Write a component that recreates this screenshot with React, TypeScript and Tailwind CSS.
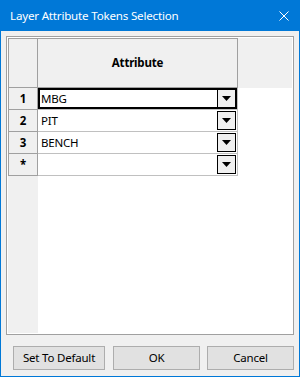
import React from 'react'

const rows = ['MBG', 'PIT', 'BENCH', '']

const DropButton = () => (
  <div className="w-[19px] h-[19px] border border-black bg-[#f0f0f0] flex items-center justify-center">
    <svg width="9" height="5" viewBox="0 0 9 5">
      <path d="M0 0H9L4.5 5Z" fill="#000" />
    </svg>
  </div>
)

const App = () => {
  return (
    <div
      className="w-[300px] h-[377px] flex flex-col bg-[#0078d7] text-[11.5px] tracking-[-0.2px] text-black"
      style={{ fontFamily: '"Noto Sans", "Liberation Sans", sans-serif' }}
    >
      <div className="h-[31px] flex items-center justify-between pl-[10px] pr-[11px] text-white text-[11.6px]">
        <span>Layer Attribute Tokens Selection</span>
        <svg width="10" height="10" viewBox="0 0 10 10">
          <path d="M0.5 0.5L9.5 9.5M9.5 0.5L0.5 9.5" stroke="#fff" strokeWidth="1" />
        </svg>
      </div>
      <div className="flex-1 flex flex-col mx-px mb-px bg-[#f0f0f0] pt-[5px] px-[5px]">
        <div className="h-[299px] border border-[#a0a0a0] bg-white p-px flex flex-col">
          <div className="flex h-[50px] bg-[#f0f0f0]">
            <div className="w-[30px] border border-[#a0a0a0]" />
            <div className="w-[200px] border-y border-r border-[#a0a0a0] flex items-center justify-center font-bold">
              Attribute
            </div>
          </div>
          {rows.map((r, i) => (
            <div key={i} className="flex h-[22px]">
              <div className="w-[30px] bg-[#f0f0f0] border-x border-b border-[#a0a0a0] flex items-center justify-center font-bold">
                {r || i < 3 ? i + 1 : '*'}
              </div>
              <div
                className={
                  'w-[200px] border-r border-b border-[#c0c0c0] flex items-center justify-between pl-[3px] pr-px ' +
                  (i === 0 ? 'ring-2 ring-inset ring-black' : '')
                }
              >
                <span>{r}</span>
                <DropButton />
              </div>
            </div>
          ))}
          <div className="flex-1 flex">
            <div className="w-[30px] bg-[#f0f0f0]" />
          </div>
        </div>
        <div className="flex mt-[11px] ml-[7px]">
          <button className="w-[92px] h-[24px] bg-[#e1e1e1] border border-[#adadad]">Set To Default</button>
          <button className="w-[87px] h-[24px] bg-[#e1e1e1] border border-[#adadad] ml-[8px]">OK</button>
          <button className="w-[87px] h-[24px] bg-[#e1e1e1] border border-[#adadad] ml-[7px]">Cancel</button>
        </div>
      </div>
    </div>
  )
}

export default App
